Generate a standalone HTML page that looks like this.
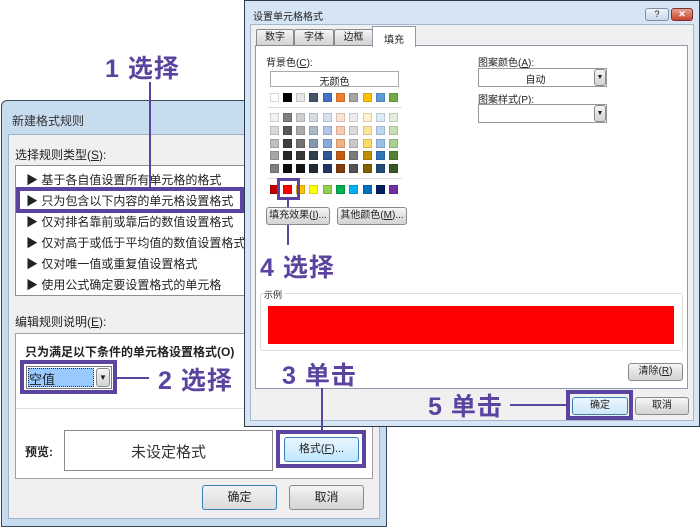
<!DOCTYPE html>
<html><head><meta charset="utf-8"><style>
*{box-sizing:border-box;margin:0;padding:0}
body{width:700px;height:528px;background:#fff;position:relative;overflow:hidden;font-family:"Liberation Sans","Noto Sans CJK SC",sans-serif;color:#222}
.a{position:absolute}
.t{position:absolute;white-space:nowrap}
.btn{position:absolute;border:1px solid #8a8a8a;border-radius:3px;background:linear-gradient(#f6f6f6,#e2e2e2 50%,#d4d4d4);text-align:center;font-size:11px}
.big{position:absolute;white-space:nowrap;color:#5a44a0;font-weight:bold;font-size:25px;letter-spacing:1px}
.pl{position:absolute;background:#5a44a0}
.pb{position:absolute;border:4px solid #5a44a0}
.sw{position:absolute;width:9px;height:9px;border:1px solid rgba(0,0,0,.15)}
</style></head><body>

<!-- left dialog -->
<div class="a" style="left:1px;top:100px;width:386px;height:427px;border:1px solid #3a4a60;border-radius:6px 6px 0 0;background:#c8dcef"></div>
<div class="t" style="left:12px;top:112px;font-size:12px;color:#333">新建格式规则</div>
<div class="a" style="left:8px;top:134px;width:372px;height:385px;background:#f0f0f0;border:1px solid #9fb3c8"></div>
<div class="t" style="left:15px;top:146px;font-size:12px">选择规则类型(<u>S</u>):</div>
<div class="a" style="left:15px;top:165px;width:240px;height:131px;background:#fff;border:1px solid #8e8f8f"></div>
<div class="t" style="left:26px;top:170px;font-size:12px;line-height:21px">▶ 基于各自值设置所有单元格的格式<br>▶ 只为包含以下内容的单元格设置格式<br>▶ 仅对排名靠前或靠后的数值设置格式<br>▶ 仅对高于或低于平均值的数值设置格式<br>▶ 仅对唯一值或重复值设置格式<br>▶ 使用公式确定要设置格式的单元格</div>
<div class="pb" style="left:16px;top:187px;width:228px;height:26px"></div>
<div class="t" style="left:15px;top:313px;font-size:12px">编辑规则说明(<u>E</u>):</div>
<div class="a" style="left:15px;top:333px;width:358px;height:146px;background:#fff;border:1px solid #a0a0a0"></div>
<div class="a" style="left:16px;top:408px;width:356px;height:1px;background:#e0e0e0"></div>
<div class="t" style="left:25px;top:343px;font-size:12px;font-weight:bold">只为满足以下条件的单元格设置格式(O)</div>
<div class="a" style="left:26px;top:366px;width:86px;height:23px;border:1px solid #7a7a7a;background:#fff"></div>
<div class="a" style="left:28px;top:368px;width:66px;height:19px;background:#99c9ff;border:1px dotted #333"></div>
<div class="t" style="left:29px;top:369px;font-size:13px">空值</div>
<div class="btn" style="left:96px;top:368px;width:14px;height:19px;font-size:8px;line-height:17px">▼</div>
<div class="pb" style="left:20px;top:360px;width:97px;height:34px"></div>
<div class="pl" style="left:117px;top:377px;width:32px;height:2px"></div>
<div class="big" style="left:158px;top:361px">2 选择</div>
<div class="t" style="left:25px;top:443px;font-size:12px;font-weight:bold">预览:</div>
<div class="a" style="left:64px;top:430px;width:209px;height:41px;border:1px solid #8a8a8a;background:#fff"></div>
<div class="t" style="left:64px;top:441px;width:209px;text-align:center;font-size:15px;color:#333">未设定格式</div>
<div class="btn" style="left:284px;top:437px;width:75px;height:25px;line-height:23px;border-color:#3c7fb1;background:linear-gradient(#eaf6fd,#bee6fd)">格式(<u>F</u>)...</div>
<div class="pb" style="left:276px;top:430px;width:90px;height:38px"></div>
<div class="btn" style="left:202px;top:485px;width:75px;height:25px;line-height:23px;border-color:#3c7fb1;background:linear-gradient(#f2f2f2,#dcdcdc);font-size:12px">确定</div>
<div class="btn" style="left:289px;top:485px;width:75px;height:25px;line-height:23px;font-size:12px">取消</div>

<!-- 1 选择 -->
<div class="big" style="left:105px;top:49px">1 选择</div>
<div class="pl" style="left:149px;top:82px;width:2px;height:106px"></div>

<!-- right dialog -->
<div class="a" style="left:244px;top:0;width:456px;height:427px;border:1px solid #2c3a4e;background:#d6e5f4"></div>
<div class="t" style="left:253px;top:8px;font-size:10px;color:#222">设置单元格格式</div>
<div class="btn" style="left:645px;top:8px;width:24px;height:13px;font-size:9px;line-height:11px;border-color:#7a8ea8;background:linear-gradient(#eef3f9,#c9d7e8)">?</div>
<div class="btn" style="left:671px;top:8px;width:22px;height:13px;font-size:9px;line-height:11px;color:#fff;font-weight:bold;border-color:#7a3030;background:linear-gradient(#e8a090,#c8442f)">✕</div>
<div class="a" style="left:250px;top:24px;width:444px;height:397px;background:#f0f0f0;border:1px solid #a5b7cc"></div>
<div class="a" style="left:255px;top:45px;width:433px;height:344px;background:#fff;border:1px solid #8e9bac"></div>
<div class="btn" style="left:256px;top:29px;width:38px;height:17px;border-radius:2px 2px 0 0;font-size:10px;line-height:15px">数字</div>
<div class="btn" style="left:294px;top:29px;width:40px;height:17px;border-radius:2px 2px 0 0;font-size:10px;line-height:15px">字体</div>
<div class="btn" style="left:334px;top:29px;width:39px;height:17px;border-radius:2px 2px 0 0;font-size:10px;line-height:15px">边框</div>
<div class="a" style="left:372px;top:26px;width:44px;height:21px;background:#fff;border:1px solid #8e9bac;border-bottom:none"></div>
<div class="t" style="left:384px;top:31px;font-size:10px">填充</div>

<div class="t" style="left:266px;top:54px;font-size:10px">背景色(<u>C</u>):</div>
<div class="a" style="left:270px;top:71px;width:129px;height:16px;border:1px solid #aaa"></div>
<div class="t" style="left:270px;top:73px;width:129px;text-align:center;font-size:10px">无颜色</div>
<div class="a" style="left:268px;top:107px;width:134px;height:1px;background:#ddd"></div>
<div class="a" style="left:268px;top:178px;width:134px;height:1px;background:#ddd"></div>
<div id="sw"></div>
<div class="pb" style="left:277px;top:178px;width:23px;height:22px;border-width:3px"></div>
<div class="pl" style="left:287px;top:200px;width:2px;height:45px"></div>
<div class="btn" style="left:266px;top:207px;width:64px;height:18px;font-size:10px;line-height:16px">填充效果(<u>I</u>)...</div>
<div class="btn" style="left:337px;top:207px;width:70px;height:18px;font-size:10px;line-height:16px">其他颜色(<u>M</u>)...</div>

<div class="t" style="left:478px;top:54px;font-size:10px">图案颜色(<u>A</u>):</div>
<div class="a" style="left:478px;top:68px;width:129px;height:19px;border:1px solid #999;background:#fff"></div>
<div class="t" style="left:478px;top:71px;width:115px;text-align:center;font-size:10px">自动</div>
<div class="btn" style="left:594px;top:69px;width:12px;height:17px;font-size:7px;line-height:15px">▼</div>
<div class="t" style="left:478px;top:91px;font-size:10px">图案样式(<u>P</u>):</div>
<div class="a" style="left:478px;top:104px;width:129px;height:19px;border:1px solid #999;background:#fff"></div>
<div class="btn" style="left:594px;top:105px;width:12px;height:17px;font-size:7px;line-height:15px">▼</div>

<div class="big" style="left:260px;top:248px">4 选择</div>

<div class="a" style="left:260px;top:293px;width:423px;height:58px;border:1px solid #dcdcdc;border-radius:3px"></div>
<div class="t" style="left:264px;top:288px;font-size:9px;background:#fff;padding-right:2px">示例</div>
<div class="a" style="left:268px;top:306px;width:406px;height:38px;background:#ff0000"></div>
<div class="btn" style="left:628px;top:363px;width:55px;height:18px;font-size:10px;line-height:16px">清除(<u>R</u>)</div>
<div class="big" style="left:282px;top:356px">3 单击</div>
<div class="pl" style="left:321px;top:388px;width:2px;height:42px"></div>

<div class="big" style="left:428px;top:387px">5 单击</div>
<div class="pl" style="left:510px;top:404px;width:56px;height:2px"></div>
<div class="btn" style="left:572px;top:397px;width:56px;height:18px;font-size:10px;line-height:16px;border-color:#3c7fb1;background:linear-gradient(#eaf6fd,#cfe8f8)">确定</div>
<div class="pb" style="left:566px;top:390px;width:67px;height:30px"></div>
<div class="btn" style="left:635px;top:397px;width:54px;height:18px;font-size:10px;line-height:16px">取消</div>

<script>
var rows=[
["FFFFFF","000000","E7E6E6","44546A","4472C4","ED7D31","A5A5A5","FFC000","5B9BD5","70AD47"],
["F2F2F2","7F7F7F","D0CECE","D6DCE4","D9E1F2","FCE4D6","EDEDED","FFF2CC","DDEBF7","E2EFDA"],
["D9D9D9","595959","AEAAAA","ACB9CA","B4C6E7","F8CBAD","DBDBDB","FFE699","BDD7EE","C6E0B4"],
["BFBFBF","404040","757171","8497B0","8EA9DB","F4B084","C9C9C9","FFD966","9BC2E6","A9D08E"],
["A6A6A6","262626","3A3838","333F4F","2F5597","C65911","7B7B7B","BF8F00","2F75B5","548235"],
["808080","0D0D0D","161616","222B35","203764","833C0C","525252","806000","1F4E78","375623"],
["C00000","FF0000","FFC000","FFFF00","92D050","00B050","00B0F0","0070C0","002060","7030A0"]];
var ys=[97,117,130,143,155,168,189],h="";
for(var r=0;r<7;r++)for(var c=0;c<10;c++){h+='<div class="sw" style="left:'+(270+c*13.3-0.5)+'px;top:'+(ys[r]-4.5)+'px;background:#'+rows[r][c]+'"></div>';}
document.getElementById("sw").outerHTML=h;
</script>
</body></html>
